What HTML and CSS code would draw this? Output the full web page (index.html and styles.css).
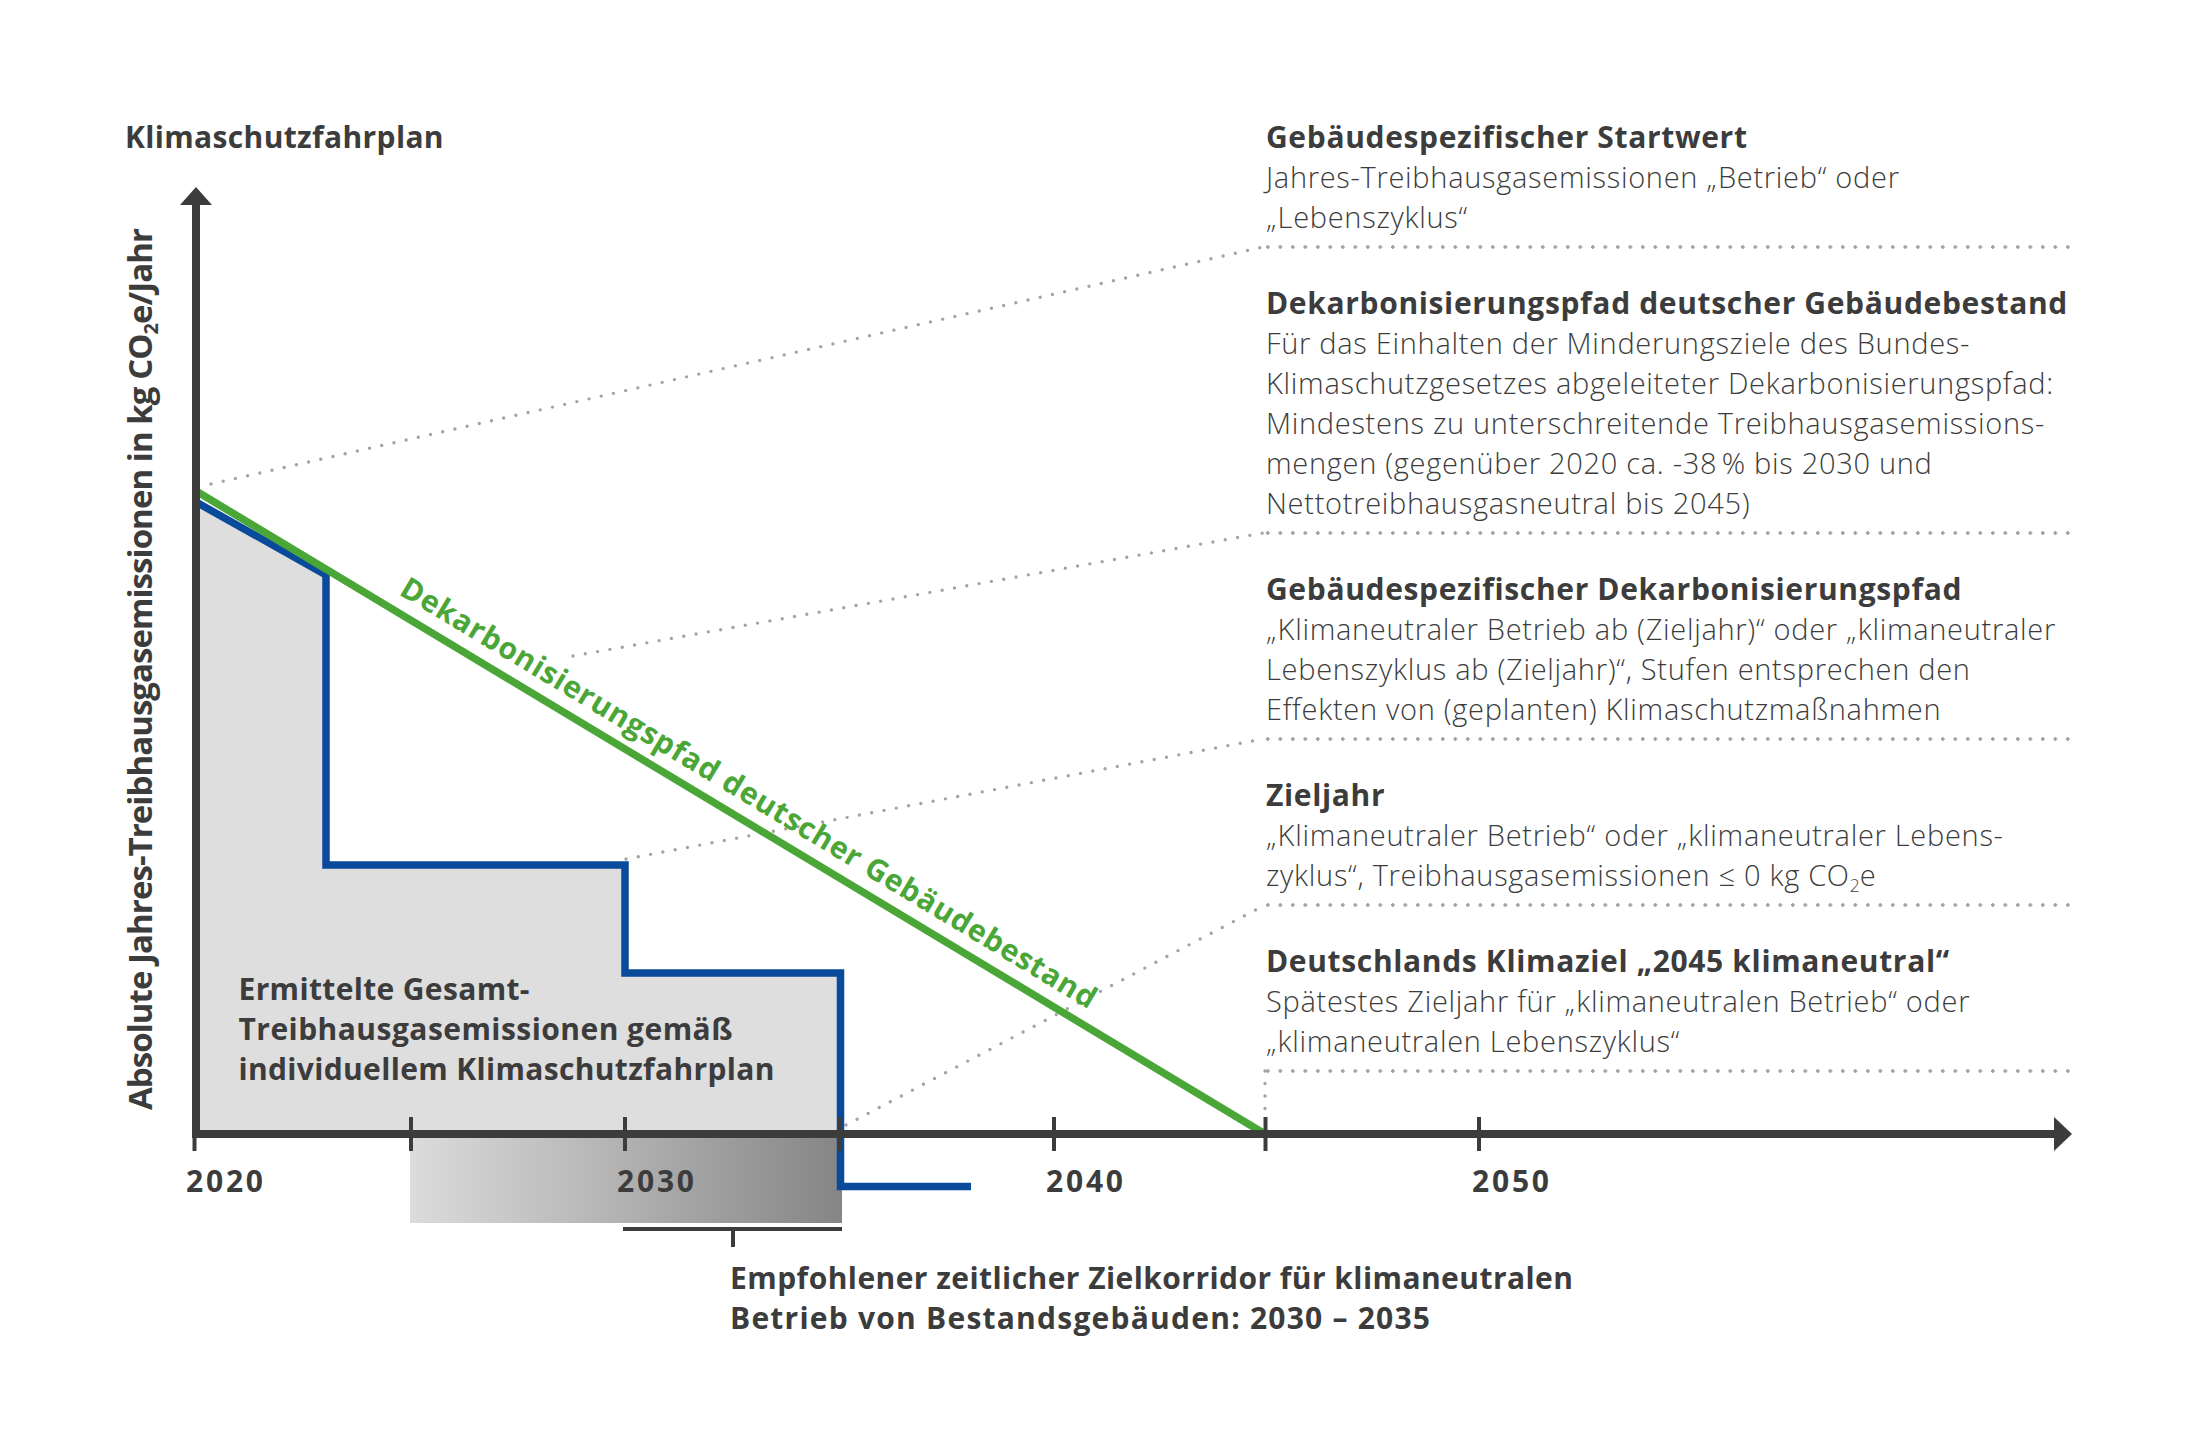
FILE: index.html
```html
<!DOCTYPE html>
<html lang="de">
<head>
<meta charset="utf-8">
<title>Klimaschutzfahrplan</title>
<link rel="stylesheet" href="styles.css">
</head>
<body>
<main class="figure">
  <svg class="chart" width="2197" height="1453" viewBox="0 0 2197 1453">
    <defs>
      <linearGradient id="corridor" x1="0" y1="0" x2="1" y2="0">
        <stop offset="0" stop-color="#dcdcdc"/>
        <stop offset="1" stop-color="#858585"/>
      </linearGradient>
    </defs>

    <!-- ermittelte Emissionen (Fläche) -->
    <polygon class="area" points="196,502 326,576 326,865 625,865 625,973 840,973 840,1134 196,1134"/>

    <!-- Zielkorridor -->
    <rect class="corridor" x="410" y="1134" width="432" height="89"/>

    <!-- Verbindungslinien zur Legende -->
    <line class="dots" x1="211" y1="484" x2="1263" y2="247"/>
    <line class="dots" x1="573" y1="656" x2="1263" y2="533"/>
    <line class="dots" x1="626" y1="859" x2="1263" y2="739"/>
    <line class="dots" x1="846" y1="1125" x2="1265" y2="905"/>
    <line class="dots" x1="1265" y1="1071" x2="1265" y2="1116"/>

    <!-- gebäudespezifischer Pfad -->
    <polyline class="path-blue" points="196,502 326,575 326,865 625,865 625,973 840.5,973 840.5,1186.5 971,1186.5"/>

    <!-- Dekarbonisierungspfad Gebäudebestand -->
    <line class="path-green" x1="196" y1="491" x2="1265" y2="1134"/>

    <!-- Achsen -->
    <line class="axis" x1="196" y1="202" x2="196" y2="1138"/>
    <polygon class="axis-head" points="196,187 212,205 180,205"/>
    <line class="axis" x1="192" y1="1134" x2="2056" y2="1134"/>
    <polygon class="axis-head" points="2072,1134 2054,1117 2054,1151"/>

    <line class="tick" x1="194.5" y1="1134" x2="194.5" y2="1151"/>
    <line class="tick" x1="411" y1="1117" x2="411" y2="1151"/>
    <line class="tick" x1="625" y1="1117" x2="625" y2="1151"/>
    <line class="tick" x1="840" y1="1117" x2="840" y2="1151"/>
    <line class="tick" x1="1054" y1="1117" x2="1054" y2="1151"/>
    <line class="tick" x1="1265.5" y1="1117" x2="1265.5" y2="1151"/>
    <line class="tick" x1="1479" y1="1117" x2="1479" y2="1151"/>

    <!-- Klammer Zielkorridor -->
    <line class="tick" x1="623" y1="1229" x2="842" y2="1229"/>
    <line class="tick" x1="733" y1="1229" x2="733" y2="1247"/>

    <!-- Jahreszahlen -->
    <text class="year" x="186" y="1191.5" textLength="77" lengthAdjust="spacing">2020</text>
    <text class="year" x="617" y="1191.5" textLength="77" lengthAdjust="spacing">2030</text>
    <text class="year" x="1046" y="1191.5" textLength="77" lengthAdjust="spacing">2040</text>
    <text class="year" x="1472" y="1191.5" textLength="77" lengthAdjust="spacing">2050</text>

    <!-- Y-Achsenbeschriftung -->
    <text class="y-label" transform="translate(152 1110) rotate(-90)" textLength="882" lengthAdjust="spacing">Absolute Jahres-Treibhausgasemissionen in kg CO<tspan class="y-sub" dy="6">2</tspan><tspan dy="-6">e/Jahr</tspan></text>

    <!-- Beschriftung grüner Pfad -->
    <text class="green-label" transform="translate(398 594) rotate(31.03)" textLength="806" lengthAdjust="spacing">Dekarbonisierungspfad deutscher Gebäudebestand</text>

    <!-- Beschriftung Fläche -->
    <text class="area-label" x="238.5" y="1000" textLength="291" lengthAdjust="spacing">Ermittelte Gesamt-</text>
    <text class="area-label" x="238.5" y="1040" textLength="494" lengthAdjust="spacing">Treibhausgasemissionen gemäß</text>
    <text class="area-label" x="238.5" y="1080" textLength="536" lengthAdjust="spacing">individuellem Klimaschutzfahrplan</text>

    <!-- Beschriftung Zielkorridor -->
    <text class="area-label" x="730" y="1289" textLength="843" lengthAdjust="spacing">Empfohlener zeitlicher Zielkorridor für klimaneutralen</text>
    <text class="area-label" x="730" y="1329" textLength="700" lengthAdjust="spacing">Betrieb von Bestandsgebäuden: 2030 – 2035</text>
  </svg>

  <div class="plot-col">
    <h1 class="chart-title">Klimaschutzfahrplan</h1>
  </div>

  <aside class="legend">
    <section class="legend-item">
      <h2>Gebäudespezifischer Startwert</h2>
      <p>Jahres-Treibhausgasemissionen „Betrieb“ oder<br>„Lebenszyklus“</p>
    </section>
    <section class="legend-item">
      <h2>Dekarbonisierungspfad deutscher Gebäudebestand</h2>
      <p>Für das Einhalten der Minderungsziele des Bundes-<br>Klimaschutzgesetzes abgeleiteter Dekarbonisierungspfad:<br>Mindestens zu unterschreitende Treibhausgasemissions-<br>mengen (gegenüber 2020 ca. -38&#8239;% bis 2030 und<br>Nettotreibhausgasneutral bis 2045)</p>
    </section>
    <section class="legend-item">
      <h2>Gebäudespezifischer Dekarbonisierungspfad</h2>
      <p>„Klimaneutraler Betrieb ab (Zieljahr)“ oder „klimaneutraler<br>Lebenszyklus ab (Zieljahr)“, Stufen entsprechen den<br>Effekten von (geplanten) Klimaschutzmaßnahmen</p>
    </section>
    <section class="legend-item">
      <h2>Zieljahr</h2>
      <p>„Klimaneutraler Betrieb“ oder „klimaneutraler Lebens-<br>zyklus“, Treibhausgasemissionen ≤ 0 kg CO<span class="sub">2</span>e</p>
    </section>
    <section class="legend-item">
      <h2>Deutschlands Klimaziel „2045 klimaneutral“</h2>
      <p>Spätestes Zieljahr für „klimaneutralen Betrieb“ oder<br>„klimaneutralen Lebenszyklus“</p>
    </section>
  </aside>
</main>
</body>
</html>
```

FILE: styles.css
```css
html, body {
  margin: 0;
  padding: 0;
  background: #ffffff;
}

.figure {
  position: relative;
  width: 2197px;
  height: 1453px;
  display: grid;
  grid-template-columns: 1266px 809px;
  align-items: start;
  font-family: "Open Sans", "Noto Sans", "Liberation Sans", sans-serif;
  color: #3c3c3c;
}

/* diagram canvas */
.chart {
  position: absolute;
  left: 0;
  top: 0;
  z-index: 0;
}

.area { fill: #dedede; }
.corridor { fill: url(#corridor); }

.dots {
  stroke: #a3a3a3;
  stroke-width: 3.4;
  stroke-linecap: round;
  stroke-dasharray: 0 12.5;
  fill: none;
}

.path-blue {
  fill: none;
  stroke: #0a4a9b;
  stroke-width: 7.5;
  stroke-linejoin: miter;
}

.path-green {
  stroke: #4aa637;
  stroke-width: 7.5;
}

.axis {
  stroke: #3c3c3c;
  stroke-width: 8;
}

.axis-head { fill: #3c3c3c; }

.tick {
  stroke: #3c3c3c;
  stroke-width: 4;
}

.year,
.area-label,
.y-label,
.green-label {
  font-family: "Open Sans", "Noto Sans", "Liberation Sans", sans-serif;
  font-weight: 700;
  fill: #3c3c3c;
}

.year { font-size: 30px; }
.area-label { font-size: 30px; }
.y-label { font-size: 33px; }
.y-sub { font-size: 20px; }
.green-label { font-size: 30px; fill: #4aa637; }

/* left column: title */
.plot-col {
  position: relative;
  z-index: 1;
  padding: 117px 0 0 125px;
}

.chart-title {
  margin: 0;
  font-size: 30px;
  line-height: 40px;
  font-weight: 700;
  letter-spacing: 0.35px;
  white-space: nowrap;
}

/* right column: legend */
.legend {
  position: relative;
  z-index: 1;
  padding-top: 117px;
}

.legend-item h2 {
  margin: 0;
  font-size: 30px;
  line-height: 40px;
  font-weight: 700;
  letter-spacing: 0.65px;
  white-space: nowrap;
}

.legend-item p {
  margin: 0;
  font-size: 29px;
  line-height: 40px;
  font-weight: 300;
  letter-spacing: 0.7px;
  white-space: nowrap;
}

.legend-item::after {
  content: "";
  display: block;
  height: 4px;
  margin-top: 8px;
  background-image: radial-gradient(circle at 1.8px 2px, #a3a3a3 1.5px, rgba(163, 163, 163, 0) 2.1px);
  background-size: 12.5px 4px;
  background-repeat: repeat-x;
}

.legend-item + .legend-item {
  margin-top: 34px;
}

.sub {
  font-size: 60%;
  line-height: 0;
  vertical-align: -0.35em;
  letter-spacing: 0;
}
```
